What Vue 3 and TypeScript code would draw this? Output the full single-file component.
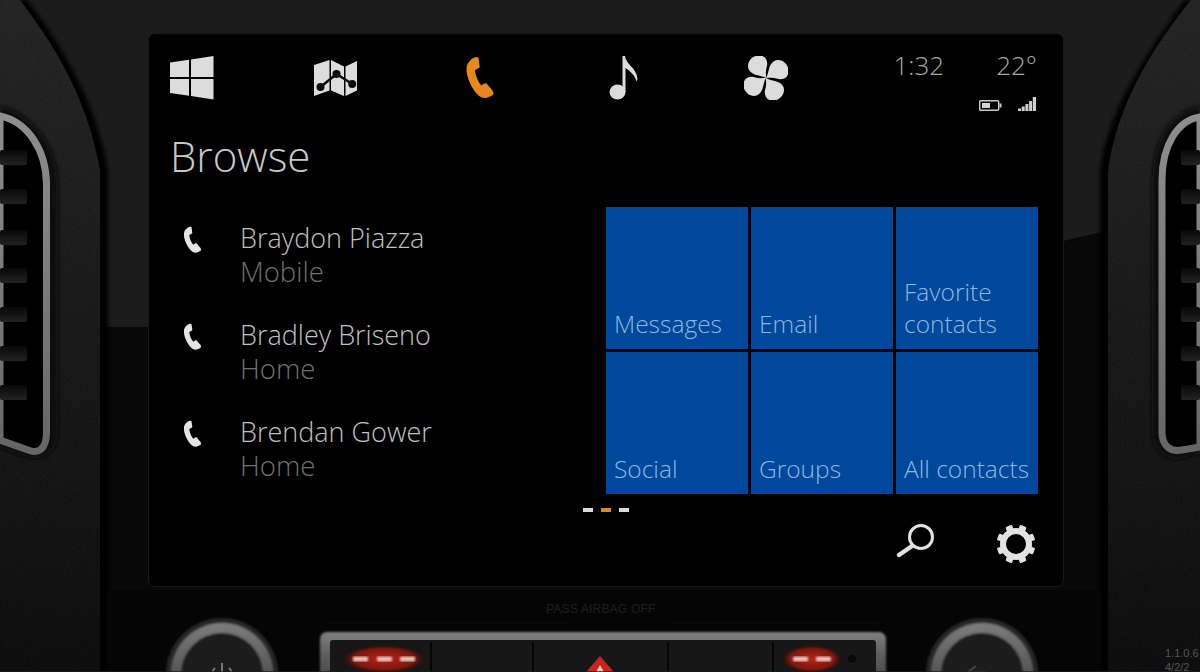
<script setup lang="ts">
const phonePath = 'M11 1C7 2 2 6 1.5 12C1 20 6 32 13 39C16 42 20 43 24 41L28 39C29 37 28 35 27 34L22 28C21 27 19.5 27 18.5 28L16.5 29.5C13 26 10 18 10 14L13 12.5C14.5 12 15 11 14.5 9.5L13.5 2C13 1 12 .7 11 1Z'
const contacts = [
  { name: 'Braydon Piazza', kind: 'Mobile' },
  { name: 'Bradley Briseno', kind: 'Home' },
  { name: 'Brendan Gower', kind: 'Home' },
]
const tiles = [['Messages'], ['Email'], ['Favorite', 'contacts'], ['Social'], ['Groups'], ['All contacts']]
const slatYs = [150, 189, 230, 268, 307, 346, 385]
const gearTeeth = [0, 45, 90, 135, 180, 225, 270, 315].map((a) => a + 22.5)
const hazardDashes = [353, 377, 400, 793, 816]
</script>

<template>
  <div class="stage">
    <svg class="dash" width="1200" height="672" viewBox="0 0 1200 672" aria-hidden="true">
      <defs>
        <linearGradient id="leather" x1="0" y1="0" x2="0" y2="1">
          <stop offset="0" stop-color="#232323" />
          <stop offset=".55" stop-color="#171717" />
          <stop offset="1" stop-color="#0c0c0c" />
        </linearGradient>
        <linearGradient id="trim" x1="0" y1="0" x2="0" y2="1">
          <stop offset="0" stop-color="#8e8e8e" />
          <stop offset=".6" stop-color="#777" />
          <stop offset="1" stop-color="#666" />
        </linearGradient>
        <linearGradient id="slat" x1="0" y1="0" x2="0" y2="1">
          <stop offset="0" stop-color="#080808" />
          <stop offset="1" stop-color="#222" />
        </linearGradient>
        <linearGradient id="ring" x1="0" y1="0" x2="0" y2="1">
          <stop offset="0" stop-color="#7c7c7c" />
          <stop offset=".5" stop-color="#555" />
          <stop offset="1" stop-color="#333" />
        </linearGradient>
        <linearGradient id="rim" x1="0" y1="0" x2="0" y2="1">
          <stop offset="0" stop-color="#808080" />
          <stop offset=".4" stop-color="#5c5c5c" />
          <stop offset="1" stop-color="#3c3c3c" />
        </linearGradient>
        <filter id="grain" x="0" y="0" width="100%" height="100%">
          <feTurbulence type="fractalNoise" baseFrequency="0.55 0.8" numOctaves="2" seed="4" />
          <feColorMatrix values="0 0 0 0 1  0 0 0 0 1  0 0 0 0 1  0.5 0 0 0 -0.2" />
          <feComposite in2="SourceAlpha" operator="in" />
        </filter>
        <filter id="soft" x="-5%" y="-5%" width="110%" height="110%">
          <feGaussianBlur stdDeviation="2" />
        </filter>
        <filter id="softer" x="-10%" y="-10%" width="120%" height="120%">
          <feGaussianBlur stdDeviation=".8" />
        </filter>
        <radialGradient id="glow">
          <stop offset="0" stop-color="#b82216" />
          <stop offset=".7" stop-color="#7c170e" />
          <stop offset="1" stop-color="#1c0806" stop-opacity="0" />
        </radialGradient>
      </defs>

      <rect width="1200" height="672" fill="#1c1c1c" />
      <polygon points="0,327 149,327 1063,241 1110,230 1200,230 1200,672 0,672" fill="#080808" />

      <!-- leather side panels -->
      <path d="M0 0H27C58 40 96 100 108 170V672H0Z" fill="#020202" filter="url(#soft)" />
      <path d="M0 0H20C50 40 85 90 100 170V672H0Z" fill="url(#leather)" />
      <path d="M0 0H20C50 40 85 90 100 170V672H0Z" filter="url(#grain)" opacity=".16" />
      <path d="M1200 0H1184C1150 50 1106 110 1100 172V672H1200Z" fill="#020202" filter="url(#soft)" />
      <path d="M1200 0H1191C1150 50 1115 110 1108 172V672H1200Z" fill="url(#leather)" />
      <path d="M1200 0H1191C1150 50 1115 110 1108 172V672H1200Z" filter="url(#grain)" opacity=".16" />

      <!-- left vent -->
      <path d="M0 106C30 112 58 145 58 185V432C58 455 42 462 24 456L0 448Z" fill="#0a0a0a" filter="url(#soft)" />
      <path d="M0 116C28 122 46 150 46.500 184V432C46.500 450 38 454 28 450L0 440Z" fill="#000" stroke="url(#trim)" stroke-width="7" />
      <rect v-for="y in slatYs" :key="'l' + y" x="0" :y="y" width="27" height="15" rx="2" fill="url(#slat)" />

      <!-- right vent -->
      <path d="M1200 106C1170 112 1152 140 1152 185V432C1152 452 1166 462 1184 458L1200 454Z" fill="#0a0a0a" filter="url(#soft)" />
      <path d="M1200 117C1178 120 1162 145 1162 180V432C1162 446 1170 452 1182 450L1200 447Z" fill="#000" stroke="url(#trim)" stroke-width="7" />
      <rect v-for="y in slatYs" :key="'r' + y" x="1181" :y="y" width="19" height="15" rx="2" fill="url(#slat)" />

      <!-- lower console -->
      <rect x="108" y="590" width="992" height="82" fill="#050505" />
      <path d="M328 623H570M670 623H880" stroke="#0f0f0f" stroke-width="1" />
      <g filter="url(#softer)">
        <circle cx="222" cy="674" r="56" fill="#262626" />
        <circle cx="222" cy="674" r="51" fill="url(#ring)" />
        <circle cx="222" cy="674" r="41" fill="#1c1c1c" />
        <circle cx="982" cy="674" r="56" fill="#262626" />
        <circle cx="982" cy="674" r="51" fill="url(#ring)" />
        <circle cx="982" cy="674" r="41" fill="#1c1c1c" />
      </g>
      <path d="M222 663V672M215 668A10 10 0 1 0 229 668" fill="none" stroke="#777" stroke-width="2" />
      <path d="M976 666L968 672L976 678M970 672H986" fill="none" stroke="#444" stroke-width="2" />
      <rect x="320" y="632" width="566" height="60" rx="7" fill="url(#rim)" filter="url(#softer)" />
      <rect x="330" y="640" width="546" height="44" rx="3" fill="#171717" />
      <path d="M431 642V672M533 642V672M668 642V672M773 642V672" stroke="#050505" stroke-width="2" />
      <ellipse cx="384" cy="659" rx="44" ry="15" fill="url(#glow)" />
      <ellipse cx="812" cy="659" rx="32" ry="15" fill="url(#glow)" />
      <rect v-for="x in hazardDashes" :key="x" :x="x" y="656.500" width="15" height="5" rx="1" fill="#e8c2ba" filter="url(#softer)" />
      <path d="M600 656L586 672H614Z" fill="#c8261c" />
      <path d="M600 665L596 672H604Z" fill="#e8c8c0" />
      <circle cx="852" cy="659" r="4" fill="#0a0a0a" />
      <text x="546" y="613" class="airbag">PASS AIRBAG OFF</text>
      <text x="1165" y="657" class="build">1.1.0.6</text>
      <text x="1165" y="671" class="build">4/2/2</text>
      <rect y="671" width="1200" height="1" fill="#0b2229" opacity=".7" />
    </svg>

    <main class="screen">
      <header class="top">
        <nav class="nav">
          <svg class="glyph" viewBox="0 0 44 44" aria-label="Start">
            <path fill="#dcdcdc" d="M0 6.500L19 3.800V21H0ZM21 3.500L43.500 0V21H21ZM0 23H19V39.800L0 37ZM21 23H43.500V43.500L21 40Z" />
          </svg>
          <svg class="glyph" viewBox="0 0 44 44" aria-label="Maps">
            <path fill="#dcdcdc" d="M0 9L15.500 4V34.500L0 40ZM17 4L30 10.500V40L17 34.500ZM31.500 10.500L43 5V34.500L31.500 40Z" />
            <path fill="none" stroke="#0b0b0b" stroke-width="2.500" d="M6.500 31L22.500 18L38.200 28" />
            <circle cx="6.500" cy="31" r="4" fill="#0b0b0b" />
            <circle cx="22.500" cy="18" r="4" fill="#0b0b0b" />
            <circle cx="38.200" cy="28" r="4" fill="#0b0b0b" />
          </svg>
          <svg class="glyph" viewBox="-8 0 44 44" aria-label="Phone">
            <path fill="#e8871c" :d="phonePath" />
          </svg>
          <svg class="glyph" viewBox="0 0 44 44" aria-label="Music">
            <ellipse cx="16.500" cy="36" rx="8" ry="7.600" fill="#dcdcdc" />
            <path fill="#dcdcdc" d="M21.500 36V0H24C24.500 8 36 12 36.500 23L35.500 25.500C33.500 18 28 14.500 24.500 12V36Z" />
          </svg>
          <svg class="glyph" viewBox="1 1.500 40 40" aria-label="Climate">
            <g fill="#dcdcdc">
              <path v-for="r in [0, 90, 180, 270]" :key="r" :transform="`rotate(${r} 21 21.500)`" d="M21 21.500C17 18.500 8 20 5 13C3 6 10 0 16 1C22 2 23 8 21.500 12C20.500 15 21 18 21 21.500Z" />
            </g>
          </svg>
        </nav>
        <div class="status">
          <div class="readings">
            <span>1:32</span>
            <span>22°</span>
          </div>
          <div class="indicators">
            <svg width="23" height="11" viewBox="0 0 23 11" aria-label="Battery">
              <rect x=".7" y=".7" width="19" height="9.600" rx="1" fill="none" stroke="#c9c9c9" stroke-width="1.400" />
              <rect x="3" y="3" width="8" height="5" fill="#d5d5d5" />
              <rect x="20.500" y="3.500" width="2" height="4" fill="#c9c9c9" />
            </svg>
            <svg width="18" height="14" viewBox="0 0 18 14" aria-label="Signal">
              <path fill="#d0d0d0" d="M0 11.500h3V14H0ZM3.700 9.500h3V14H3.700ZM7.400 7h3V14H7.400ZM11.100 4h3V14H11.100ZM14.800 0H18V14H14.800Z" />
            </svg>
          </div>
        </div>
      </header>

      <h1 class="title">Browse</h1>

      <section class="body">
        <ul class="contacts">
          <li v-for="c in contacts" :key="c.name" class="contact">
            <svg class="call" viewBox="0 0 30 44" aria-hidden="true">
              <path fill="#e4e4e4" :d="phonePath" />
            </svg>
            <div>
              <div class="name">{{ c.name }}</div>
              <div class="kind">{{ c.kind }}</div>
            </div>
          </li>
        </ul>
        <div class="tiles">
          <div v-for="t in tiles" :key="t.join()" class="tile">
            <span v-for="line in t" :key="line">{{ line }}</span>
          </div>
        </div>
      </section>

      <footer class="foot">
        <div class="dots">
          <i></i>
          <i class="on"></i>
          <i></i>
        </div>
        <div class="tools">
          <svg width="41" height="36" viewBox="0 0 41 36" aria-label="Search">
            <circle cx="26" cy="14" r="11.500" fill="none" stroke="#e2e2e2" stroke-width="3" />
            <path d="M17 23L4 32" stroke="#e2e2e2" stroke-width="4.500" stroke-linecap="round" />
          </svg>
          <svg width="42" height="42" viewBox="0 0 42 42" aria-label="Settings">
            <circle cx="21" cy="21" r="13" fill="none" stroke="#e2e2e2" stroke-width="6" />
            <rect v-for="a in gearTeeth" :key="a" x="17.500" y="1.500" width="7" height="8" rx="1.500" fill="#e2e2e2" :transform="`rotate(${a} 21 21)`" />
          </svg>
        </div>
      </footer>
    </main>
  </div>
</template>

<style>
html, body { margin: 0; background: #000; }
</style>

<style scoped>
.stage {
  position: relative;
  width: 1200px;
  height: 672px;
  overflow: hidden;
  font-family: "Open Sans", "Noto Sans", sans-serif;
  font-weight: 300;
}
.dash { position: absolute; inset: 0; display: block; }
.airbag { font: 12px "Liberation Sans", sans-serif; fill: #1f1f1f; letter-spacing: .2px; }
.build { font: 11px "Liberation Sans", sans-serif; fill: #555; }

.screen {
  position: absolute;
  left: 149px;
  top: 34px;
  width: 914px;
  height: 552px;
  box-sizing: border-box;
  padding: 22px 25px 0 21px;
  display: flex;
  flex-direction: column;
  background: #000;
  border-radius: 6px;
  box-shadow: 0 0 0 1px #181818;
}

.top { display: flex; height: 44px; justify-content: space-between; }
.nav { display: grid; grid-template-columns: repeat(5, 143.500px); justify-items: start; }
.glyph { width: 44px; height: 44px; display: block; }
.status { display: flex; flex-direction: column; align-items: flex-end; margin-top: -8px; }
.readings { display: flex; gap: 52px; font-size: 26px; line-height: 34px; color: #a8a8a8; margin-right: 1px; }
.indicators { display: flex; align-items: flex-end; gap: 16px; margin-top: 15px; margin-right: 2px; }

.title {
  margin: 31px 0 0;
  height: 76px;
  font-size: 42px;
  line-height: 50px;
  font-weight: 300;
  color: #c8c8c8;
}

.body { display: flex; justify-content: space-between; align-items: flex-start; }
.contacts { list-style: none; margin: 14px 0 0 13px; padding: 0; display: flex; flex-direction: column; gap: 29px; }
.contact { display: flex; gap: 38px; height: 68px; }
.call { width: 19px; height: 28px; margin-top: 5px; flex: none; }
.name { font-size: 27px; line-height: 34px; color: #c0c0c0; }
.kind { font-size: 27.500px; line-height: 34px; color: #707070; }

.tiles { display: grid; grid-template-columns: repeat(3, 142px); grid-auto-rows: 142px; gap: 3px; }
.tile {
  display: flex;
  flex-direction: column;
  justify-content: flex-end;
  padding: 0 0 9px 8px;
  background: #00489c;
  color: #8fb7df;
  font-size: 24.500px;
  line-height: 32px;
  white-space: nowrap;
}

.foot { display: flex; justify-content: space-between; margin-left: 413px; }
.dots { display: flex; gap: 8px; margin-top: 14px; }
.dots i { width: 10px; height: 4px; background: #dadada; }
.dots i.on { background: #e08a1e; }
.tools { display: flex; gap: 59px; margin-top: 29px; align-items: flex-start; margin-right: 1px; }
</style>
